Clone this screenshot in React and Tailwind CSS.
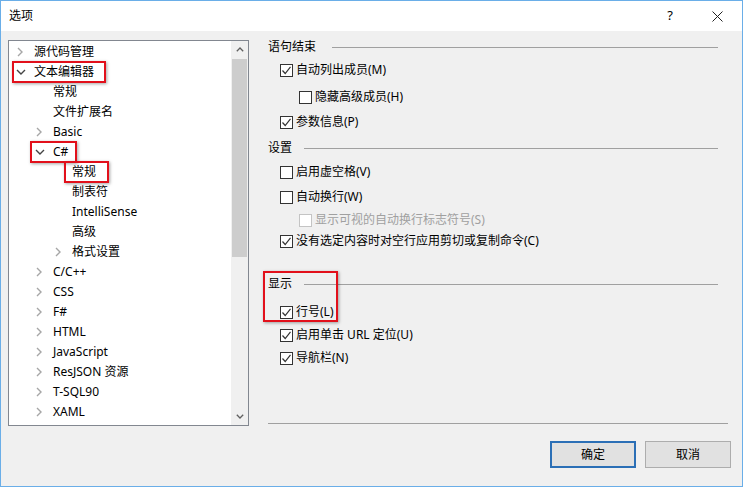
import React from 'react';

const treeItems = [
  { t: '源代码管理', l: 0, c: 'r' },
  { t: '文本编辑器', l: 0, c: 'd', box: 'left-[3px] w-[94px]' },
  { t: '常规', l: 1 },
  { t: '文件扩展名', l: 1 },
  { t: 'Basic', l: 1, c: 'r' },
  { t: 'C#', l: 1, c: 'd', box: 'left-[21px] w-[47px]' },
  { t: '常规', l: 2, box: 'left-[55px] w-[45px]' },
  { t: '制表符', l: 2 },
  { t: 'IntelliSense', l: 2 },
  { t: '高级', l: 2 },
  { t: '格式设置', l: 2, c: 'r' },
  { t: 'C/C++', l: 1, c: 'r' },
  { t: 'CSS', l: 1, c: 'r' },
  { t: 'F#', l: 1, c: 'r' },
  { t: 'HTML', l: 1, c: 'r' },
  { t: 'JavaScript', l: 1, c: 'r' },
  { t: 'ResJSON 资源', l: 1, c: 'r' },
  { t: 'T-SQL90', l: 1, c: 'r' },
  { t: 'XAML', l: 1, c: 'r' },
];

const indent = ['pl-[4px]', 'pl-[23px]', 'pl-[42px]'];

const Chevron = ({ kind }) => {
  if (kind === 'r')
    return (
      <svg width="8" height="10" viewBox="0 0 8 10">
        <path d="M2 1 L6 5 L2 9" stroke="#a6a6a6" strokeWidth="1.4" fill="none" />
      </svg>
    );
  if (kind === 'd')
    return (
      <svg width="10" height="8" viewBox="0 0 10 8">
        <path d="M1 2 L5 6 L9 2" stroke="#444444" strokeWidth="1.4" fill="none" />
      </svg>
    );
  return null;
};

const Check = ({ checked, disabled }) => (
  <span
    className={`w-[13px] h-[13px] border bg-white flex items-center justify-center shrink-0 ${
      disabled ? 'border-[#c4c4c4]' : 'border-[#333333]'
    }`}
  >
    {checked && (
      <svg width="11" height="11" viewBox="0 0 11 11">
        <path d="M1.5 5.5 L4.2 8.5 L9.5 1.8" stroke="#333333" strokeWidth="1.2" fill="none" />
      </svg>
    )}
  </span>
);

const Option = ({ label, checked, disabled, sub, mt }) => (
  <div className={`h-[20px] flex items-center ${sub ? 'pl-[31px]' : 'pl-[12px]'} ${mt}`}>
    <Check checked={checked} disabled={disabled} />
    <span className={`ml-[3px] ${disabled ? 'text-[#a0a0a0]' : 'text-black'}`}>{label}</span>
  </div>
);

const Heading = ({ title, gap, mt }) => (
  <div className={`h-[14px] flex items-center pr-[10px] ${mt}`}>
    <span>{title}</span>
    <span className={`flex-1 h-px bg-[#a0a0a0] ${gap}`} />
  </div>
);

const App = () => {
  return (
    <div className="w-[743px] h-[487px] border border-[#6aaee8] bg-[#f0f0f0] flex flex-col text-[12px] text-black font-['Segoe_UI','Noto_Sans','Noto_Sans_CJK_SC',sans-serif] overflow-hidden">
      {/* 标题栏 */}
      <div className="h-[30px] bg-white flex items-center shrink-0">
        <span className="ml-[8px]">选项</span>
        <span className="ml-auto text-[13px] mr-[39px]">?</span>
        <svg width="11" height="11" viewBox="0 0 11 11" className="mr-[19px]">
          <path d="M0.5 0.5 L10.5 10.5 M10.5 0.5 L0.5 10.5" stroke="#222" strokeWidth="1" />
        </svg>
      </div>

      <div className="flex pt-[9px] pl-[7px]">
        {/* 树 */}
        <div className="w-[241px] h-[386px] border border-[#828790] bg-white flex">
          <div className="flex-1 pt-[1px]">
            {treeItems.map((it, idx) => (
              <div key={idx} className={`relative h-[20px] flex items-center ${indent[it.l]}`}>
                <span className="w-[21px] flex items-center">
                  <span className="ml-[3px] flex">
                    <Chevron kind={it.c} />
                  </span>
                </span>
                <span className="whitespace-nowrap">{it.t}</span>
                {it.box && (
                  <span
                    className={`absolute top-[-1px] h-[22px] border-2 border-[#e2101b] shadow-[1px_1px_3px_rgba(0,0,0,0.35)] ${it.box}`}
                  />
                )}
              </div>
            ))}
          </div>
          <div className="w-[17px] bg-[#f0f0f0] flex flex-col">
            <div className="h-[17px] flex items-center justify-center">
              <svg width="8" height="5" viewBox="0 0 8 5">
                <path d="M0.8 4.2 L4 1 L7.2 4.2" stroke="#606060" strokeWidth="1.3" fill="none" />
              </svg>
            </div>
            <div className="flex-1 flex flex-col">
              <div className="mt-[1px] h-[198px] mx-[1px] bg-[#cdcdcd]" />
            </div>
            <div className="h-[17px] flex items-center justify-center">
              <svg width="8" height="5" viewBox="0 0 8 5">
                <path d="M0.8 0.8 L4 4 L7.2 0.8" stroke="#606060" strokeWidth="1.3" fill="none" />
              </svg>
            </div>
          </div>
        </div>

        {/* 右侧选项 */}
        <div className="relative ml-[14px] w-[465px] h-[386px] pl-[5px] flex flex-col">
          <Heading title="语句结束" gap="ml-[16px]" mt="" />
          <Option label="自动列出成员(M)" checked mt="mt-[6px]" />
          <Option label="隐藏高级成员(H)" sub mt="mt-[7px]" />
          <Option label="参数信息(P)" checked mt="mt-[5px]" />

          <Heading title="设置" gap="ml-[12px]" mt="mt-[9px]" />
          <Option label="启用虚空格(V)" mt="mt-[7px]" />
          <Option label="自动换行(W)" mt="mt-[5px]" />
          <Option label="显示可视的自动换行标志符号(S)" sub disabled mt="mt-[3px]" />
          <Option label="没有选定内容时对空行应用剪切或复制命令(C)" checked mt="mt-[1px]" />

          <Heading title="显示" gap="ml-[12px]" mt="mt-[26px]" />
          <Option label="行号(L)" checked mt="mt-[11px]" />
          <Option label="启用单击 URL 定位(U)" checked mt="mt-[3px]" />
          <Option label="导航栏(N)" checked mt="mt-[3px]" />

          <div className="mt-auto mb-[2px] h-px bg-[#a0a0a0]" />

          <span className="absolute left-0 top-[231px] w-[75px] h-[51px] border-2 border-[#e2101b] shadow-[1px_1px_3px_rgba(0,0,0,0.35)]" />
        </div>
      </div>

      {/* 按钮 */}
      <div className="flex justify-end gap-[9px] pr-[11px] mt-[15px]">
        <button className="w-[86px] h-[27px] border-2 border-[#2b6fb6] bg-[#e1e1e1] flex items-center justify-center">
          确定
        </button>
        <button className="w-[86px] h-[27px] border border-[#adadad] bg-[#e1e1e1] flex items-center justify-center">
          取消
        </button>
      </div>
    </div>
  );
};

export default App;
